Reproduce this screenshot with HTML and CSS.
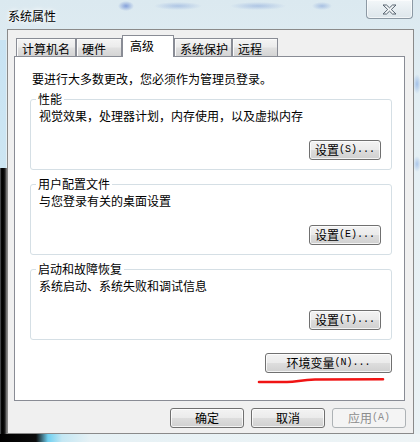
FILE: index.html
```html
<!DOCTYPE html>
<html lang="zh-CN">
<head>
<meta charset="utf-8">
<title>系统属性</title>
<link rel="stylesheet" href="styles.css">
</head>
<body>
<div class="window">
  <div class="titlebar">
    <span class="title">系统属性</span>
    <button class="close" aria-label="关闭">
      <svg width="15" height="11" viewBox="-1 -1 15 11"><polygon points="0,0 3.5,0 6.5,2.8 9.5,0 13,0 8.3,4.5 13,9 9.5,9 6.5,6.2 3.5,9 0,9 4.7,4.5" fill="#f4f7f9" stroke="#56636f" stroke-width="1" stroke-linejoin="round"/></svg>
    </button>
  </div>
  <div class="client">
    <div class="tabs">
      <div class="tab w60">计算机名</div>
      <div class="tab w46">硬件</div>
      <div class="tab sel">高级</div>
      <div class="tab w58">系统保护</div>
      <div class="tab w46">远程</div>
    </div>
    <div class="panel">
      <p class="intro">要进行大多数更改，您必须作为管理员登录。</p>
      <fieldset class="group">
        <legend>性能</legend>
        <p class="desc">视觉效果，处理器计划，内存使用，以及虚拟内存</p>
        <div class="row"><button class="btn set">设置<span class="mn">(S)...</span></button></div>
      </fieldset>
      <fieldset class="group">
        <legend>用户配置文件</legend>
        <p class="desc">与您登录有关的桌面设置</p>
        <div class="row"><button class="btn set">设置<span class="mn">(E)...</span></button></div>
      </fieldset>
      <fieldset class="group last">
        <legend>启动和故障恢复</legend>
        <p class="desc">系统启动、系统失败和调试信息</p>
        <div class="row"><button class="btn set">设置<span class="mn">(T)...</span></button></div>
      </fieldset>
      <div class="row env-row"><button class="btn env">环境变量<span class="mn">(N)...</span></button></div>
      <svg class="mark" width="130" height="10" viewBox="0 0 130 10"><path d="M2 7 L30 7 C40 7 44 4.6 58 4.5 L126 4.3" fill="none" stroke="#f01414" stroke-width="2.6" stroke-linecap="round"/></svg>
    </div>
    <div class="actions">
      <button class="btn act">确定</button>
      <button class="btn act">取消</button>
      <button class="btn act" disabled>应用<span class="mn">(A)</span></button>
    </div>
  </div>
</div>
</body>
</html>
```
FILE: styles.css
```css
* { box-sizing: border-box; }
html, body { margin: 0; padding: 0; }
body {
  width: 420px;
  height: 442px;
  overflow: hidden;
  font-family: "Noto Sans CJK SC", "Noto Sans", sans-serif;
  font-size: 12px;
  line-height: 14px;
  color: #000;
  background: #e3eef3;
}
.window {
  width: 420px;
  height: 442px;
  display: flex;
  flex-direction: column;
  padding: 0 6px 8px 7px;
  background:
    linear-gradient(90deg, #000 0, #0c0c0c 36px, #6fd0f0 48px, #c4e7f3 62px, #e6f1f5 90px, #eef4f6 100%) 0 434px / 100% 8px no-repeat,
    linear-gradient(90deg, #7d8186 0, #0a0a0a 1px, #000 3px, #1e1e1e 5px, #5e5e5e 6px, #8a8a8a 7px) 0 168px / 7px 100% no-repeat,
    linear-gradient(#c8e3f3, #cde6f3) 0 40px / 6px 128px no-repeat,
    radial-gradient(ellipse 8px 5px at 126px 6px, rgba(60,100,200,.55), transparent),
    radial-gradient(ellipse 24px 4px at 178px 6px, rgba(90,130,205,.35), transparent),
    radial-gradient(ellipse 28px 4px at 258px 6px, rgba(90,130,205,.35), transparent),
    radial-gradient(ellipse 10px 4px at 322px 6px, rgba(90,130,205,.4), transparent),
    radial-gradient(ellipse 4px 10px at 417px 84px, rgba(90,140,220,.45), transparent),
    radial-gradient(ellipse 4px 8px at 417px 164px, rgba(90,140,220,.4), transparent),
    linear-gradient(#dbe9f0, #e4eff4 30%, #eaf2f5);
}
.titlebar {
  height: 29px;
  flex: none;
  display: flex;
  align-items: flex-start;
  justify-content: space-between;
  padding-left: 1px;
  padding-right: 1px;
}
.title {
  padding-top: 9px;
  text-shadow: 0 0 4px #fff, 0 0 6px #fff;
}
.close {
  width: 47px;
  height: 19px;
  margin: 0;
  padding: 4px 0 0;
  border: 1px solid #8c99a4;
  border-top: 0;
  border-radius: 0 0 4px 4px;
  background: linear-gradient(#f3f7f9, #e6edf1 55%, #dde6eb);
  box-shadow: inset 0 0 0 1px rgba(255,255,255,.6);
  display: flex;
  justify-content: center;
  align-items: flex-start;
}
.close svg { display: block; }
.client {
  flex: 1;
  display: flex;
  flex-direction: column;
  border: 1px solid #8a8a8a;
  background: #f0f0f0;
  padding: 5px 8px 5px 6px;
}
.tabs {
  height: 21px;
  flex: none;
  display: flex;
  align-items: flex-end;
  padding-left: 2px;
}
.tab {
  height: 18px;
  border: 1px solid #898c95;
  border-bottom: 0;
  padding: 3px 0 0 5px;
  white-space: nowrap;
  background: linear-gradient(#f4f4f4, #ececec 45%, #e0e0e0 55%, #d4d4d4);
  box-shadow: inset 1px 1px 0 #fbfbfb;
}
.w60 { width: 60px; }
.w46 { width: 46px; }
.w58 { width: 58px; }
.tab.sel {
  width: 52px;
  height: 22px;
  margin-bottom: -1px;
  padding-left: 7px;
  background: #fff;
  box-shadow: none;
  position: relative;
  z-index: 1;
}
.panel {
  height: 345px;
  flex: none;
  position: relative;
  border: 1px solid #898c95;
  background: #fff;
  padding: 15px 12px 0 15px;
}
.intro { margin: 0 0 6px 2px; }
.group {
  margin: 0 0 7px;
  padding: 3px 10px 9px 8px;
  border: 1px solid #d5dfe5;
  border-radius: 3px;
  min-width: 0;
}
.group.last { margin-bottom: 0; }
.group legend {
  padding: 0 2px;
  margin-left: -3px;
  line-height: 14px;
}
.desc { margin: 0; }
.row {
  display: flex;
  justify-content: flex-end;
  margin-top: 17px;
}
.env-row { margin-top: 13px; }
.btn {
  height: 20px;
  margin: 0;
  padding: 0;
  font: inherit;
  line-height: 14px;
  color: #000;
  border: 1px solid #707070;
  border-radius: 3px;
  background: linear-gradient(#f3f3f3, #ebebeb 48%, #dddddd 52%, #d0d0d0);
  box-shadow: inset 0 0 0 1px rgba(255,255,255,.75);
  display: flex;
  align-items: center;
  justify-content: center;
  white-space: nowrap;
}
.mn {
  font-family: "Liberation Mono", "DejaVu Sans Mono", monospace;
  font-size: 10px;
}
.set { width: 72px; }
.env { width: 127px; }
.mark {
  position: absolute;
  left: 242px;
  top: 318px;
}
.actions {
  display: flex;
  justify-content: flex-end;
  gap: 7px;
  margin-top: 7px;
  margin-right: -1px;
}
.act { width: 74px; }
.btn:disabled {
  color: #8d8d8d;
  border-color: #adb2b5;
  background: #f4f4f4;
  box-shadow: none;
}
```
